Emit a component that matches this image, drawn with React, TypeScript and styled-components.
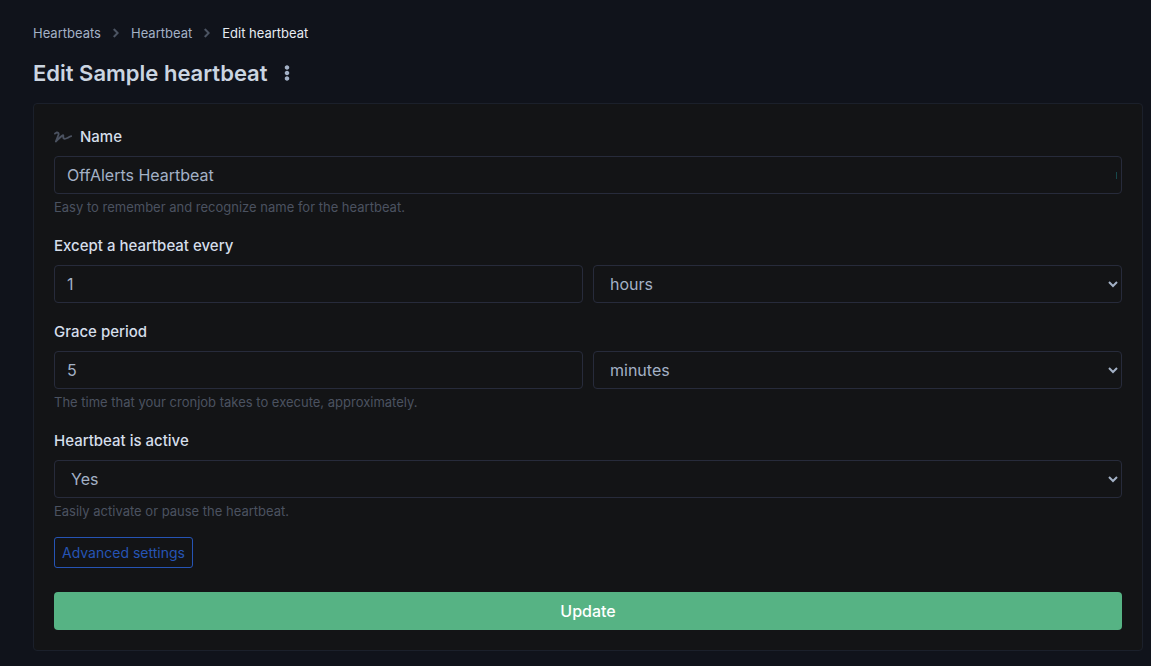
import React from "react";
import styled, { createGlobalStyle } from "styled-components";
import { FaSignature, FaEllipsisV, FaChevronRight } from "react-icons/fa";

const GlobalStyle = createGlobalStyle`
  *, *::before, *::after { box-sizing: border-box; }
  body {
    margin: 0;
    background: #10131b;
    color: #cbd5e1;
    font-family: Inter, "Liberation Sans", sans-serif;
    font-size: 16px;
    line-height: 24px;
  }
  input, select, button { font: inherit; }
`;

const Page = styled.main`
  padding: 23px 8px 15px 33px;
`;

const Breadcrumbs = styled.ol`
  display: flex;
  align-items: center;
  margin: 0;
  padding: 0;
  list-style: none;
  font-size: 13px;
  line-height: 20px;
`;

const Crumb = styled.li`
  display: flex;
  align-items: center;
  color: #e6ebf2;

  a {
    color: #a3b1c6;
    text-decoration: none;
  }

  svg {
    margin: 0 10px;
    color: #4f5866;
    stroke: currentColor;
    stroke-width: 24px;
  }
`;

const Heading = styled.header`
  display: flex;
  align-items: center;
  gap: 5px;
  margin: 16px 0 15px;
`;

const Title = styled.h1`
  margin: 0;
  font-size: 22px;
  font-weight: 600;
  line-height: 29px;
  color: #cbd5e1;
`;

const MenuButton = styled.button`
  display: flex;
  padding: 0 6px 2px;
  border: 0;
  background: none;
  color: #a3b1c6;
`;

const Card = styled.form`
  padding: 20px;
  border: 1px solid #1b202b;
  border-radius: 4px;
  background: #131416;
`;

const Group = styled.div`
  margin-bottom: 16px;
`;

const Label = styled.label`
  display: flex;
  align-items: center;
  gap: 8px;
  margin-bottom: 6px;
  font-size: 15px;
  font-weight: 500;
  line-height: 26px;
  color: #d5deea;

  svg { color: #4b5260; }
`;

const Row = styled.div`
  display: grid;
  grid-template-columns: 1fr 1fr;
  gap: 10px;
`;

const Input = styled.input`
  display: block;
  width: 100%;
  height: 38px;
  padding: 0 12px;
  border: 1px solid #272b3b;
  border-radius: 4px;
  background: transparent;
  color: #a3b1c6;
`;

const NameBox = styled.div`
  position: relative;

  &::after {
    content: "";
    position: absolute;
    top: 16px;
    right: 5px;
    width: 1px;
    height: 7px;
    background: #17484b;
  }
`;

const SelectBox = styled.div`
  display: grid;
  align-items: center;

  > * { grid-area: 1 / 1; }

  svg {
    justify-self: end;
    margin-right: 4px;
    pointer-events: none;
    color: #a3b1c6;
  }
`;

const NativeSelect = styled.select`
  width: 100%;
  height: 38px;
  padding: 0 16px;
  appearance: none;
  border: 1px solid #272b3b;
  border-radius: 4px;
  background: transparent;
  color: #a3b1c6;

  option { background: #131416; }
`;

const Help = styled.small`
  display: block;
  margin-top: 4px;
  font-size: 13px;
  line-height: 19px;
  color: #4b5260;
`;

const OutlineButton = styled.button`
  display: block;
  height: 31px;
  padding: 0 7px;
  border: 1px solid #2654b5;
  border-radius: 3px;
  background: transparent;
  color: #2654b5;
  font-size: 14px;
`;

const SubmitButton = styled.button`
  display: block;
  width: 100%;
  height: 38px;
  margin-top: 24px;
  border: 0;
  border-radius: 4px;
  background: #56b384;
  color: #fff;
  font-weight: 500;
`;

type SelectProps = { id?: string; label?: string; options: string[]; value: string };

const Select = ({ id, label, options, value }: SelectProps) => (
  <SelectBox>
    <NativeSelect id={id} aria-label={label} defaultValue={value}>
      {options.map((o) => (
        <option key={o}>{o}</option>
      ))}
    </NativeSelect>
    <svg width="10" height="8" viewBox="0 0 10 8" fill="none" stroke="currentColor" strokeWidth="2" aria-hidden="true">
      <path d="M1 2l4 4 4-4" />
    </svg>
  </SelectBox>
);

const units = ["seconds", "minutes", "hours", "days"];

export default function App() {
  return (
    <>
      <GlobalStyle />
      <Page>
        <nav aria-label="Breadcrumb">
          <Breadcrumbs>
            <Crumb>
              <a href="#heartbeats">Heartbeats</a>
              <FaChevronRight size={10} />
            </Crumb>
            <Crumb>
              <a href="#heartbeat">Heartbeat</a>
              <FaChevronRight size={10} />
            </Crumb>
            <Crumb aria-current="page">Edit heartbeat</Crumb>
          </Breadcrumbs>
        </nav>
        <Heading>
          <Title>Edit Sample heartbeat</Title>
          <MenuButton type="button" aria-label="More actions">
            <FaEllipsisV size={16} />
          </MenuButton>
        </Heading>
        <Card onSubmit={(e) => e.preventDefault()}>
          <Group>
            <Label htmlFor="name">
              <FaSignature size={18} />
              Name
            </Label>
            <NameBox>
              <Input id="name" defaultValue="OffAlerts Heartbeat" />
            </NameBox>
            <Help>Easy to remember and recognize name for the heartbeat.</Help>
          </Group>
          <Group>
            <Label htmlFor="every">Except a heartbeat every</Label>
            <Row>
              <Input id="every" defaultValue="1" />
              <Select label="Heartbeat unit" options={units} value="hours" />
            </Row>
          </Group>
          <Group>
            <Label htmlFor="grace">Grace period</Label>
            <Row>
              <Input id="grace" defaultValue="5" />
              <Select label="Grace period unit" options={units} value="minutes" />
            </Row>
            <Help>The time that your cronjob takes to execute, approximately.</Help>
          </Group>
          <Group>
            <Label htmlFor="active">Heartbeat is active</Label>
            <Select id="active" options={["Yes", "No"]} value="Yes" />
            <Help>Easily activate or pause the heartbeat.</Help>
          </Group>
          <OutlineButton type="button">Advanced settings</OutlineButton>
          <SubmitButton type="submit">Update</SubmitButton>
        </Card>
      </Page>
    </>
  );
}
